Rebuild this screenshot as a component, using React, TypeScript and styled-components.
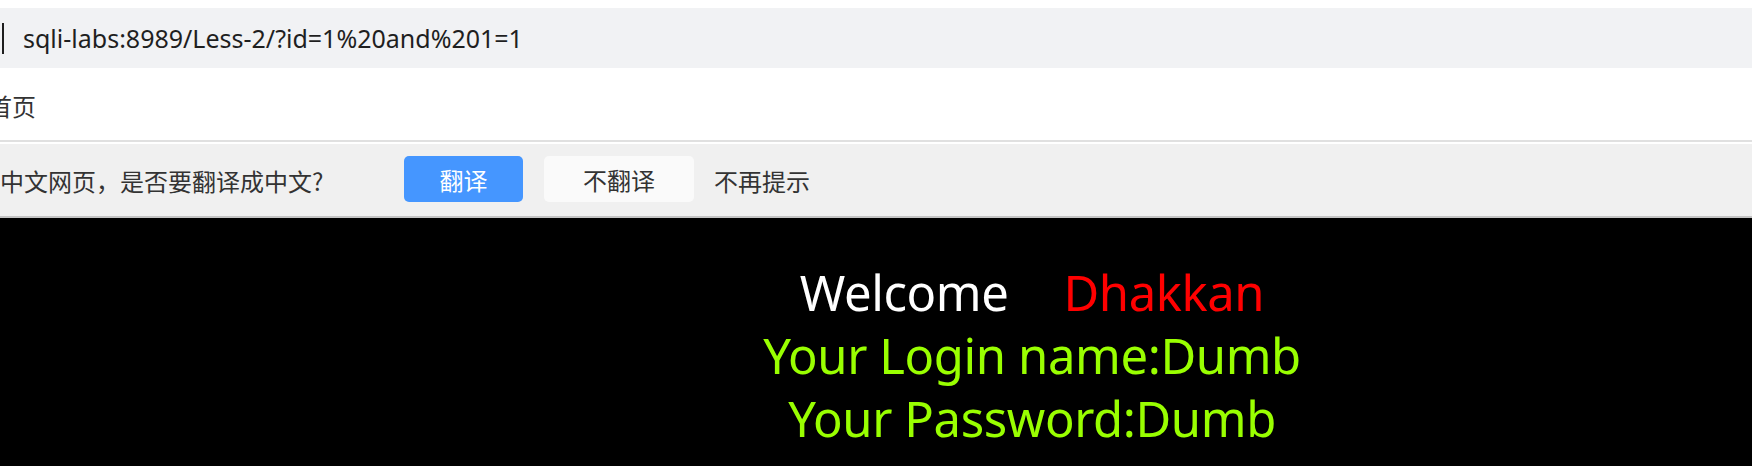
import React from "react";
import styled, { createGlobalStyle } from "styled-components";

const GlobalStyle = createGlobalStyle`
  html, body {
    margin: 0;
    padding: 0;
    background: #ffffff;
  }
  body {
    font-family: "Noto Sans", "Noto Sans CJK SC", sans-serif;
    overflow: hidden;
  }
  * { box-sizing: border-box; }
`;

const Page = styled.div`
  display: flex;
  flex-direction: column;
  height: 100vh;
  background: #ffffff;
`;

const AddressBar = styled.div`
  margin-top: 8px;
  height: 60px;
  background: #f1f2f4;
  display: flex;
  align-items: center;
  padding-left: 2px;
`;

const Caret = styled.span`
  width: 2px;
  height: 31px;
  background: #1e1e1e;
  margin-top: 15px;
  align-self: flex-start;
`;

const Url = styled.span`
  margin-left: 19px;
  font-family: "Noto Sans", sans-serif;
  font-size: 25px;
  color: #1f1f1f;
  white-space: nowrap;
`;

const TabRow = styled.div`
  height: 72px;
  background: #ffffff;
  display: flex;
  align-items: center;
`;

const TabLabel = styled.span`
  margin-left: -12px;
  margin-top: 2px;
  font-family: "Noto Sans CJK SC", sans-serif;
  font-size: 24px;
  color: #333333;
`;

const TranslateBar = styled.div`
  height: 78px;
  border-top: 2px solid #e0e0e0;
  border-bottom: 2px solid #c4c4c4;
  background: linear-gradient(#ffffff 0 2px, #f0f0f0 2px);
  padding-top: 2px;
  display: flex;
  align-items: center;
`;

const Message = styled.span`
  min-width: 404px;
  font-family: "Noto Sans CJK SC", sans-serif;
  font-size: 24px;
  color: #333333;
  white-space: nowrap;
`;

const BarButton = styled.button<{ $primary?: boolean; $w: number }>`
  width: ${(p) => p.$w}px;
  height: 46px;
  margin-top: -2px;
  border: none;
  border-radius: 5px;
  padding: 0;
  background: ${(p) => (p.$primary ? "#4596ff" : "#fafafa")};
  color: ${(p) => (p.$primary ? "#ffffff" : "#333333")};
  font-family: "Noto Sans CJK SC", sans-serif;
  font-size: 24px;
  margin-right: ${(p) => (p.$primary ? 21 : 20)}px;
  cursor: pointer;
`;

const TextAction = styled.span`
  font-family: "Noto Sans CJK SC", sans-serif;
  font-size: 24px;
  color: #333333;
`;

const Content = styled.main`
  flex: 1;
  background: #000000;
  padding-top: 43px;
  padding-left: 312px;
  text-align: center;
  font-family: "Noto Sans", sans-serif;
  font-size: 49px;
  line-height: 63px;
  letter-spacing: -0.4px;
`;

const Line = styled.div<{ $color: string }>`
  color: ${(p) => p.$color};
`;

const Name = styled.span`
  color: #ff0000;
  margin-left: 55px;
`;

export default function App() {
  return (
    <Page>
      <GlobalStyle />
      <AddressBar>
        <Caret />
        <Url>sqli-labs:8989/Less-2/?id=1%20and%201=1</Url>
      </AddressBar>
      <TabRow>
        <TabLabel>首页</TabLabel>
      </TabRow>
      <TranslateBar>
        <Message>中文网页，是否要翻译成中文?</Message>
        <BarButton $primary $w={119}>翻译</BarButton>
        <BarButton $w={150}>不翻译</BarButton>
        <TextAction>不再提示</TextAction>
      </TranslateBar>
      <Content>
        <Line $color="#ffffff">
          Welcome<Name>Dhakkan</Name>
        </Line>
        <Line $color="#99ff00">Your Login name:Dumb</Line>
        <Line $color="#99ff00">Your Password:Dumb</Line>
      </Content>
    </Page>
  );
}
